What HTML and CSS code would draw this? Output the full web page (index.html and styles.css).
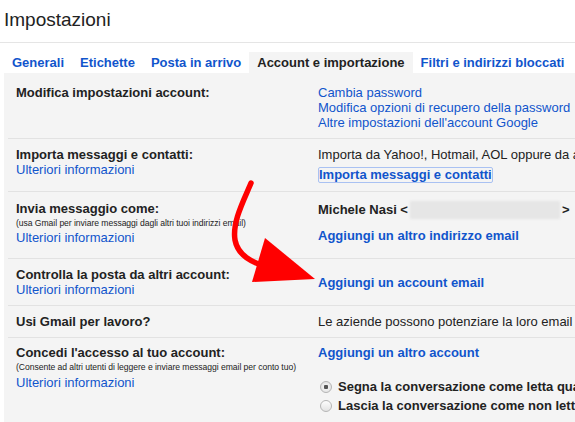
FILE: index.html
```html
<!DOCTYPE html>
<html lang="it">
<head>
    <meta charset="UTF-8">
    <title>Impostazioni</title>
    <link rel="stylesheet" href="styles.css">
</head>
<body>

<div class="page">
    <div class="header">
        <h1 class="title">Impostazioni</h1>
    </div>

    <div class="tabs">
        <a class="tab" href="#">Generali</a>
        <a class="tab" href="#">Etichette</a>
        <a class="tab" href="#">Posta in arrivo</a>
        <a class="tab tab-active" href="#">Account e importazione</a>
        <a class="tab" href="#">Filtri e indirizzi bloccati</a>
    </div>

    <div class="panel">
        <table class="settings">
            <tr class="row-account">
                <td class="label"><b>Modifica impostazioni account:</b></td>
                <td class="value">
                    <a class="link" href="#">Cambia password</a><br>
                    <a class="link" href="#">Modifica opzioni di recupero della password</a><br>
                    <a class="link" href="#">Altre impostazioni dell'account Google</a>
                </td>
            </tr>
            <tr class="row-import">
                <td class="label">
                    <b>Importa messaggi e contatti:</b><br>
                    <a class="link" href="#">Ulteriori informazioni</a>
                </td>
                <td class="value">
                    Importa da Yahoo!, Hotmail, AOL oppure da altri account webmail o POP3.
                    <div class="import-action">
                        <a class="link link-focus" href="#">Importa messaggi e contatti</a>
                    </div>
                </td>
            </tr>
            <tr class="row-send">
                <td class="label">
                    <b>Invia messaggio come:</b>
                    <div class="note">(usa Gmail per inviare messaggi dagli altri tuoi indirizzi email)</div>
                    <a class="link" href="#">Ulteriori informazioni</a>
                </td>
                <td class="value">
                    <b>Michele Nasi &lt;<span class="blurred"></span>&gt;</b>
                    <div class="value-action">
                        <a class="link link-bold" href="#">Aggiungi un altro indirizzo email</a>
                    </div>
                </td>
            </tr>
            <tr class="row-check">
                <td class="label">
                    <b>Controlla la posta da altri account:</b><br>
                    <a class="link" href="#">Ulteriori informazioni</a>
                </td>
                <td class="value value-middle">
                    <a class="link link-bold" href="#">Aggiungi un account email</a>
                </td>
            </tr>
            <tr class="row-work">
                <td class="label"><b>Usi Gmail per lavoro?</b></td>
                <td class="value">Le aziende possono potenziare la loro email con Google Apps for Work.</td>
            </tr>
            <tr class="row-grant">
                <td class="label">
                    <b>Concedi l'accesso al tuo account:</b>
                    <div class="note">(Consente ad altri utenti di leggere e inviare messaggi email per conto tuo)</div>
                    <a class="link" href="#">Ulteriori informazioni</a>
                </td>
                <td class="value">
                    <a class="link link-bold" href="#">Aggiungi un altro account</a>
                    <div class="radios">
                        <label class="radio"><input type="radio" name="read" checked> Segna la conversazione come letta quando viene aperta da altri</label>
                        <label class="radio"><input type="radio" name="read"> Lascia la conversazione come non letta quando viene aperta da altri</label>
                    </div>
                </td>
            </tr>
        </table>
    </div>

    <!-- red hand-drawn arrow pointing at "Aggiungi un account email" -->
    <svg class="arrow" width="575" height="422" viewBox="0 0 575 422">
        <path d="M251 183 C 244 200, 232 222, 235 240 C 238 256, 252 262, 268 268"
              fill="none" stroke="#ff0000" stroke-width="5.5" stroke-linecap="round"/>
        <polygon points="265,238 315,279 252,282" fill="#ff0000"/>
    </svg>
</div>

</body>
</html>
```

FILE: styles.css
```css
html, body {
    margin: 0;
    overflow: hidden;
    background-color: #fff;
}

body {
    font-family: "Liberation Sans", Arial, sans-serif;
    font-size: 13px;
    color: #222;
}

.page {
    position: relative;
    width: 900px;
}

.header {
    padding: 8px 4px 10px 4px;
    border-bottom: 1px solid #e5e5e5;
}

.title {
    margin: 0;
    font-size: 19px;
    font-weight: normal;
    line-height: 24px;
    color: #222;
}

.tabs {
    display: flex;
    margin: 9px 0 0 4px;
}

.tab {
    padding: 3px 8px;
    line-height: 15px;
    font-weight: bold;
    color: #15c;
    text-decoration: none;
}

.tab-active {
    background-color: #f4f4f4;
    color: #222;
}

.panel {
    margin-left: 4px;
    padding-top: 4px;
    background-color: #f4f4f4;
}

.settings {
    border-collapse: collapse;
    margin-left: 4px;
    width: 880px;
}

.settings tr + tr {
    border-top: 1px solid #e2e2e2;
}

.settings tr:last-child {
    border-bottom: 1px solid #e2e2e2;
}

.settings td {
    vertical-align: top;
    line-height: 15px;
    padding: 8px 0;
}

.label {
    width: 302px;
    padding-left: 8px !important;
}

.value {
    white-space: nowrap;
}

.value-middle {
    vertical-align: middle !important;
}

.link {
    color: #15c;
    text-decoration: none;
}

.link-bold {
    font-weight: bold;
}

.link-focus {
    display: inline-block;
    line-height: 14px;
    border: 1px solid #a9c1f2;
    border-radius: 2px;
    font-weight: bold;
}

.import-action {
    margin-top: 5px;
}

.value-action {
    margin-top: 9px;
}

.note {
    font-size: 8.6px;
    line-height: 14px;
    letter-spacing: -0.05px;
    white-space: nowrap;
}

.row-send td {
    padding-top: 9px;
    padding-bottom: 13px;
}

.row-work td {
    padding-top: 8px;
}

.row-grant td {
    padding-top: 7px;
    padding-bottom: 9px;
}

.row-grant .note {
    line-height: 15px;
}

.blurred {
    display: inline-block;
    width: 150px;
    height: 18px;
    margin: 0 2px;
    vertical-align: -5px;
    background-color: #e6e6e6;
    filter: blur(1px);
}

.radios {
    margin-top: 17px;
}

.radio {
    display: flex;
    align-items: center;
    height: 19px;
    margin-left: 2px;
    font-weight: bold;
}

.radio input {
    appearance: none;
    width: 12px;
    height: 12px;
    margin: 0 6px 0 0;
    border: 1px solid #b5b5b5;
    border-radius: 50%;
    background: linear-gradient(#fdfdfd, #e3e3e3);
}

.radio input:checked {
    background: radial-gradient(circle, #555 0, #555 2px, #f0f0f0 2.5px, #dcdcdc 100%);
}

.arrow {
    position: absolute;
    top: 0;
    left: 0;
    pointer-events: none;
}
```
